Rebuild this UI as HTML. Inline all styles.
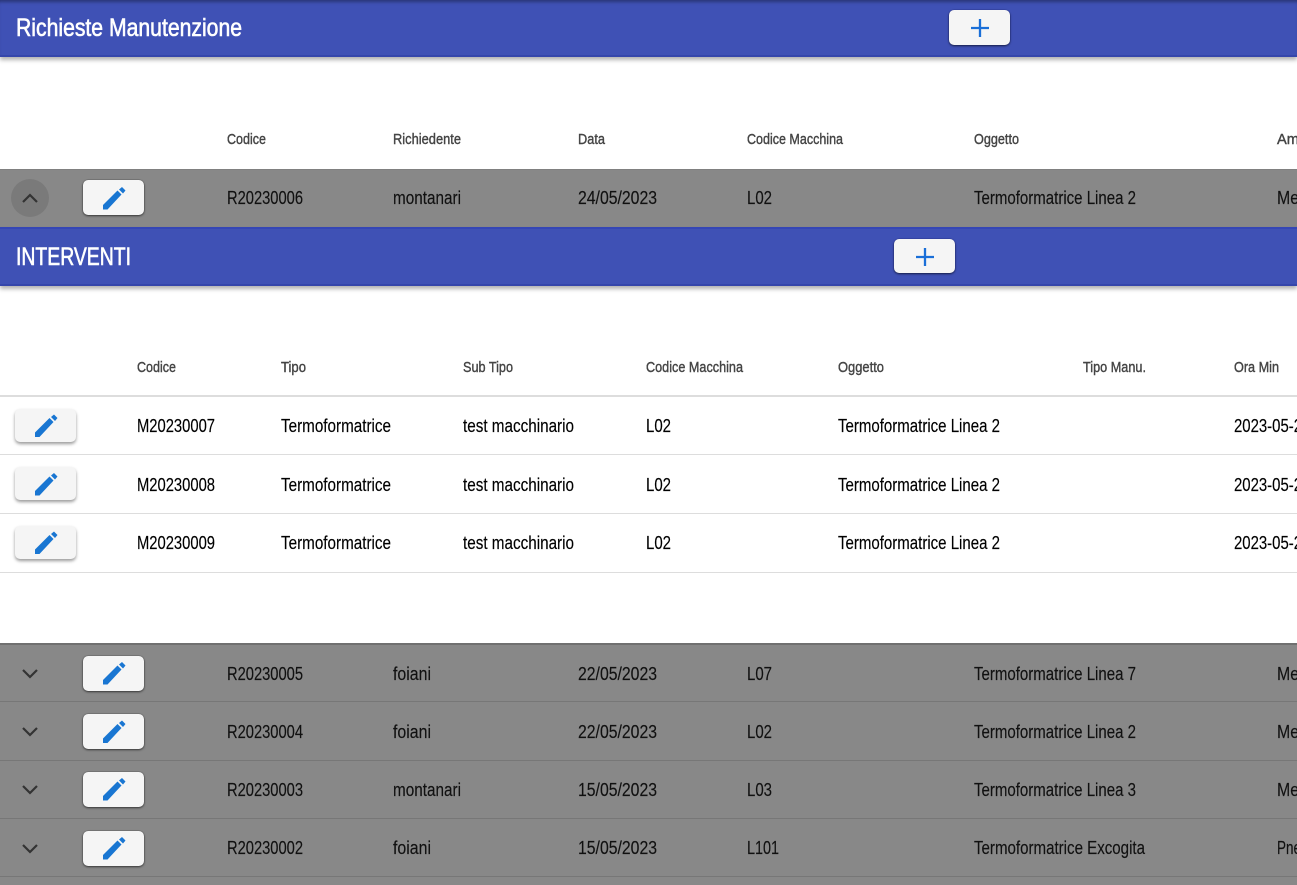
<!DOCTYPE html>
<html lang="it">
<head>
<meta charset="utf-8">
<title>Richieste Manutenzione</title>
<style>
html,body{margin:0;padding:0;width:1297px;height:885px;overflow:hidden;background:#fff}
svg.t{position:absolute;left:0;top:0;z-index:5}
text{font-family:"Liberation Sans",Arial,sans-serif}
.ti{font-size:25px;fill:#fff;stroke:#fff;stroke-width:.6px}
.h{font-size:15px;fill:#444;stroke:#444;stroke-width:.4px}
.r{font-size:18.5px;fill:#000;stroke:#000;stroke-width:.15px}
.g{fill:#111;stroke:#111}
.bar{position:absolute;left:0;width:1297px;background:#3f51b5}
.band{position:absolute;left:0;width:1297px;background:#888;border-bottom:1px solid #777;box-sizing:border-box}
.line{position:absolute;left:0;width:1297px;height:1px;background:#ddd}
.btn{position:absolute;width:61px;height:35px;background:#f5f5f5;border-radius:5px;box-shadow:0 1px 2px rgba(0,0,0,.55),0 0 1px rgba(0,0,0,.7)}
.btn.w{height:33px;box-shadow:0 2px 3px rgba(0,0,0,.4)}
.btn.p{box-shadow:0 1px 2px rgba(0,0,0,.6),0 0 1px #1a237e}
</style>
</head>
<body>
<div class="bar" style="top:0;height:57px;border-bottom:2px solid #3546ab;box-sizing:border-box;box-shadow:inset 0 4px 3px -2px rgba(0,0,0,.35),0 3px 4px rgba(0,0,0,.3)"></div>

<div class="band" style="top:169px;height:59px;border-top:1px solid #808080"></div>
<div class="bar" style="top:227px;height:59px;border-top:2px solid #3546b5;border-bottom:2px solid #3546ab;box-sizing:border-box;box-shadow:0 3px 4px rgba(0,0,0,.3);z-index:2"></div>

<div class="line" style="top:395px;height:2px"></div>
<div class="line" style="top:454px"></div>
<div class="line" style="top:513px"></div>
<div class="line" style="top:572px"></div>

<div class="band" style="top:643px;height:59px;border-top:2px solid #707070"></div>
<div class="band" style="top:702px;height:59px"></div>
<div class="band" style="top:761px;height:58px"></div>
<div class="band" style="top:819px;height:58px"></div>
<div class="band" style="top:877px;height:8px;border-bottom:0"></div>

<div class="btn p" style="left:949px;top:10px;z-index:3"></div>
<div class="btn p" style="left:894px;top:239px;height:34px;z-index:3"></div>

<div class="btn" style="left:83px;top:180px"></div>
<div class="btn w" style="left:15px;top:409px"></div>
<div class="btn w" style="left:15px;top:467px"></div>
<div class="btn w" style="left:15px;top:526px"></div>
<div class="btn" style="left:83px;top:656px"></div>
<div class="btn" style="left:83px;top:714px"></div>
<div class="btn" style="left:83px;top:772px"></div>
<div class="btn" style="left:83px;top:831px"></div>

<svg class="t" width="1297" height="885" viewBox="0 0 1297 885" xmlns="http://www.w3.org/2000/svg">
<defs>
<path id="pen" d="M20 25L34.5 10.5L38.5 14.5L24.5 29.5H20ZM36 9.5L39 7L42.5 10.5L40 13.5Z" fill="#1976d2"/>
<path id="plus" d="M9 0V18M0 9H18" fill="none" stroke="#1a6fd8" stroke-width="2.3"/>
<path id="down" d="M1 1L8 8L15 1" fill="none" stroke="#333" stroke-width="2.2"/>
</defs>

<use href="#plus" x="971" y="19"/>
<use href="#plus" x="916" y="248"/>

<circle cx="30" cy="198" r="19" fill="#000" fill-opacity=".1"/>
<path d="M23 202L30 195L37 202" fill="none" stroke="#333" stroke-width="2.2"/>
<use href="#down" x="22" y="669"/>
<use href="#down" x="22" y="727"/>
<use href="#down" x="22" y="785"/>
<use href="#down" x="22" y="844"/>

<use href="#pen" x="83" y="180"/>
<use href="#pen" x="15" y="407.5"/>
<use href="#pen" x="15" y="466"/>
<use href="#pen" x="15" y="524.5"/>
<use href="#pen" x="83" y="655"/>
<use href="#pen" x="83" y="713.5"/>
<use href="#pen" x="83" y="771"/>
<use href="#pen" x="83" y="830"/>

<text class="ti" x="16" y="36" textLength="226" lengthAdjust="spacingAndGlyphs">Richieste Manutenzione</text>
<text class="ti" x="16" y="265" textLength="115" lengthAdjust="spacingAndGlyphs">INTERVENTI</text>

<text class="h" x="227" y="144" textLength="39" lengthAdjust="spacingAndGlyphs">Codice</text>
<text class="h" x="393" y="144" textLength="68" lengthAdjust="spacingAndGlyphs">Richiedente</text>
<text class="h" x="578" y="144" textLength="27" lengthAdjust="spacingAndGlyphs">Data</text>
<text class="h" x="747" y="144" textLength="96" lengthAdjust="spacingAndGlyphs">Codice Macchina</text>
<text class="h" x="974" y="144" textLength="45" lengthAdjust="spacingAndGlyphs">Oggetto</text>
<text class="h" x="1277" y="144" textLength="22" lengthAdjust="spacingAndGlyphs">Am</text>

<text class="h" x="137" y="372" textLength="39" lengthAdjust="spacingAndGlyphs">Codice</text>
<text class="h" x="281" y="372" textLength="25" lengthAdjust="spacingAndGlyphs">Tipo</text>
<text class="h" x="463" y="372" textLength="50" lengthAdjust="spacingAndGlyphs">Sub Tipo</text>
<text class="h" x="646" y="372" textLength="97" lengthAdjust="spacingAndGlyphs">Codice Macchina</text>
<text class="h" x="838" y="372" textLength="46" lengthAdjust="spacingAndGlyphs">Oggetto</text>
<text class="h" x="1083" y="372" textLength="63" lengthAdjust="spacingAndGlyphs">Tipo Manu.</text>
<text class="h" x="1234" y="372" textLength="45" lengthAdjust="spacingAndGlyphs">Ora Min</text>

<text class="r g" x="227" y="204" textLength="76" lengthAdjust="spacingAndGlyphs">R20230006</text>
<text class="r g" x="393" y="204" textLength="68" lengthAdjust="spacingAndGlyphs">montanari</text>
<text class="r g" x="578" y="204" textLength="79" lengthAdjust="spacingAndGlyphs">24/05/2023</text>
<text class="r g" x="747" y="204" textLength="25" lengthAdjust="spacingAndGlyphs">L02</text>
<text class="r g" x="974" y="204" textLength="162" lengthAdjust="spacingAndGlyphs">Termoformatrice Linea 2</text>
<text class="r g" x="1277" y="204" textLength="22" lengthAdjust="spacingAndGlyphs">Me</text>

<text class="r" x="137" y="432" textLength="78" lengthAdjust="spacingAndGlyphs">M20230007</text>
<text class="r" x="281" y="432" textLength="110" lengthAdjust="spacingAndGlyphs">Termoformatrice</text>
<text class="r" x="463" y="432" textLength="111" lengthAdjust="spacingAndGlyphs">test macchinario</text>
<text class="r" x="646" y="432" textLength="25" lengthAdjust="spacingAndGlyphs">L02</text>
<text class="r" x="838" y="432" textLength="162" lengthAdjust="spacingAndGlyphs">Termoformatrice Linea 2</text>
<text class="r" x="1234" y="432" textLength="68" lengthAdjust="spacingAndGlyphs">2023-05-2</text>

<text class="r" x="137" y="491" textLength="78" lengthAdjust="spacingAndGlyphs">M20230008</text>
<text class="r" x="281" y="491" textLength="110" lengthAdjust="spacingAndGlyphs">Termoformatrice</text>
<text class="r" x="463" y="491" textLength="111" lengthAdjust="spacingAndGlyphs">test macchinario</text>
<text class="r" x="646" y="491" textLength="25" lengthAdjust="spacingAndGlyphs">L02</text>
<text class="r" x="838" y="491" textLength="162" lengthAdjust="spacingAndGlyphs">Termoformatrice Linea 2</text>
<text class="r" x="1234" y="491" textLength="68" lengthAdjust="spacingAndGlyphs">2023-05-2</text>

<text class="r" x="137" y="549" textLength="78" lengthAdjust="spacingAndGlyphs">M20230009</text>
<text class="r" x="281" y="549" textLength="110" lengthAdjust="spacingAndGlyphs">Termoformatrice</text>
<text class="r" x="463" y="549" textLength="111" lengthAdjust="spacingAndGlyphs">test macchinario</text>
<text class="r" x="646" y="549" textLength="25" lengthAdjust="spacingAndGlyphs">L02</text>
<text class="r" x="838" y="549" textLength="162" lengthAdjust="spacingAndGlyphs">Termoformatrice Linea 2</text>
<text class="r" x="1234" y="549" textLength="68" lengthAdjust="spacingAndGlyphs">2023-05-2</text>

<text class="r g" x="227" y="680" textLength="76" lengthAdjust="spacingAndGlyphs">R20230005</text>
<text class="r g" x="393" y="680" textLength="38" lengthAdjust="spacingAndGlyphs">foiani</text>
<text class="r g" x="578" y="680" textLength="79" lengthAdjust="spacingAndGlyphs">22/05/2023</text>
<text class="r g" x="747" y="680" textLength="25" lengthAdjust="spacingAndGlyphs">L07</text>
<text class="r g" x="974" y="680" textLength="162" lengthAdjust="spacingAndGlyphs">Termoformatrice Linea 7</text>
<text class="r g" x="1277" y="680" textLength="22" lengthAdjust="spacingAndGlyphs">Me</text>

<text class="r g" x="227" y="738" textLength="76" lengthAdjust="spacingAndGlyphs">R20230004</text>
<text class="r g" x="393" y="738" textLength="38" lengthAdjust="spacingAndGlyphs">foiani</text>
<text class="r g" x="578" y="738" textLength="79" lengthAdjust="spacingAndGlyphs">22/05/2023</text>
<text class="r g" x="747" y="738" textLength="25" lengthAdjust="spacingAndGlyphs">L02</text>
<text class="r g" x="974" y="738" textLength="162" lengthAdjust="spacingAndGlyphs">Termoformatrice Linea 2</text>
<text class="r g" x="1277" y="738" textLength="22" lengthAdjust="spacingAndGlyphs">Me</text>

<text class="r g" x="227" y="796" textLength="76" lengthAdjust="spacingAndGlyphs">R20230003</text>
<text class="r g" x="393" y="796" textLength="68" lengthAdjust="spacingAndGlyphs">montanari</text>
<text class="r g" x="578" y="796" textLength="79" lengthAdjust="spacingAndGlyphs">15/05/2023</text>
<text class="r g" x="747" y="796" textLength="25" lengthAdjust="spacingAndGlyphs">L03</text>
<text class="r g" x="974" y="796" textLength="162" lengthAdjust="spacingAndGlyphs">Termoformatrice Linea 3</text>
<text class="r g" x="1277" y="796" textLength="22" lengthAdjust="spacingAndGlyphs">Me</text>

<text class="r g" x="227" y="854" textLength="76" lengthAdjust="spacingAndGlyphs">R20230002</text>
<text class="r g" x="393" y="854" textLength="38" lengthAdjust="spacingAndGlyphs">foiani</text>
<text class="r g" x="578" y="854" textLength="79" lengthAdjust="spacingAndGlyphs">15/05/2023</text>
<text class="r g" x="747" y="854" textLength="32" lengthAdjust="spacingAndGlyphs">L101</text>
<text class="r g" x="974" y="854" textLength="171" lengthAdjust="spacingAndGlyphs">Termoformatrice Excogita</text>
<text class="r g" x="1277" y="854" textLength="24" lengthAdjust="spacingAndGlyphs">Pne</text>
</svg>
</body>
</html>
